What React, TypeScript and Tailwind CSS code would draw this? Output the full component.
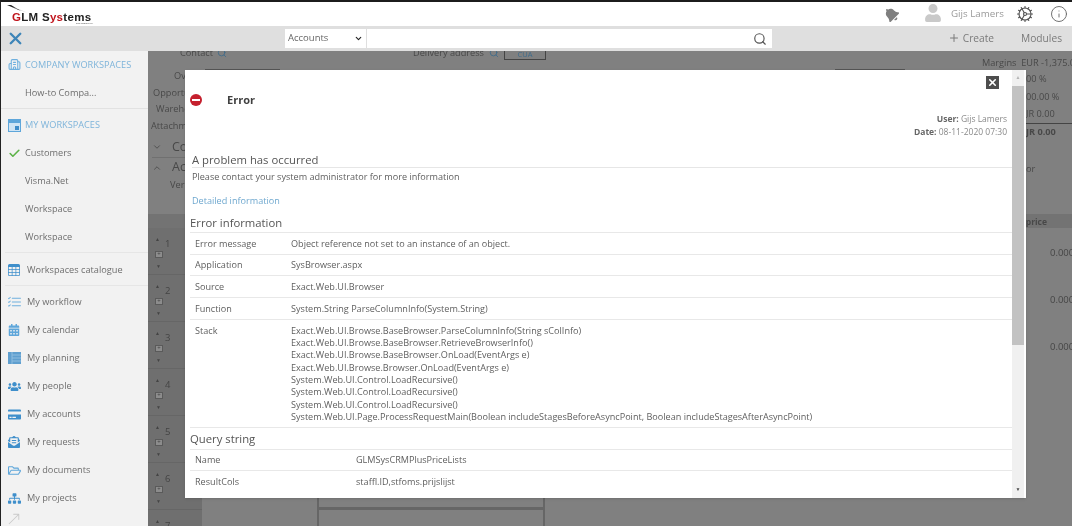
import { Building2, Check, ChevronDown, ChevronUp, Cog, Info, Plus, Search, X } from "lucide-react";
import { FaBell, FaCalendarAlt, FaCreditCard, FaEnvelopeOpenText, FaRegFolderOpen, FaSitemap, FaUser, FaUsers } from "react-icons/fa";
import { BsTable, BsListCheck, BsArrowUpRight } from "react-icons/bs";
import type { ReactNode } from "react";

const errorRows = [
  ["Error message", "Object reference not set to an instance of an object."],
  ["Application", "SysBrowser.aspx"],
  ["Source", "Exact.Web.UI.Browser"],
  ["Function", "System.String ParseColumnInfo(System.String)"],
];

const stack = [
  "Exact.Web.UI.Browse.BaseBrowser.ParseColumnInfo(String sColInfo)",
  "Exact.Web.UI.Browse.BaseBrowser.RetrieveBrowserInfo()",
  "Exact.Web.UI.Browse.BaseBrowser.OnLoad(EventArgs e)",
  "Exact.Web.UI.Browse.Browser.OnLoad(EventArgs e)",
  "System.Web.UI.Control.LoadRecursive()",
  "System.Web.UI.Control.LoadRecursive()",
  "System.Web.UI.Control.LoadRecursive()",
  "System.Web.UI.Page.ProcessRequestMain(Boolean includeStagesBeforeAsyncPoint, Boolean includeStagesAfterAsyncPoint)",
];

function PlanningIcon() {
  return (
    <svg width="13" height="12" viewBox="0 0 13 12">
      <rect width="13" height="12" fill="#5f9fcf" />
      <path d="M4 0V12M4 3H13M4 6H13M4 9H13" stroke="#8fbde0" strokeWidth="1" />
    </svg>
  );
}

function WindowIcon() {
  return (
    <svg width="13" height="13" viewBox="0 0 13 13">
      <rect width="13" height="13" fill="#5ea6da" />
      <rect x="1" y="4" width="11" height="8" fill="#cfe4f4" />
      <rect x="7" y="7" width="4" height="4" fill="#3f8cc8" />
    </svg>
  );
}

const menuItems: [string, ReactNode][] = [
  ["My workflow", <BsListCheck size={15} className="text-[#6fb0de]" />],
  ["My calendar", <FaCalendarAlt size={12} className="text-[#5ea6da]" />],
  ["My planning", <PlanningIcon />],
  ["My people", <FaUsers size={13} />],
  ["My accounts", <FaCreditCard size={13} />],
  ["My requests", <FaEnvelopeOpenText size={12} />],
  ["My documents", <FaRegFolderOpen size={13} className="text-[#5ea6da]" />],
  ["My projects", <FaSitemap size={13} />],
];

function WorkspaceRow({ label, icon }: { label: string; icon?: ReactNode }) {
  return (
    <div className="h-[28px] flex items-center">
      <div className="w-[24px] flex justify-center pl-[3px] shrink-0">{icon}</div>
      <span>{label}</span>
    </div>
  );
}

function MenuRow({ label, icon }: { label: string; icon: ReactNode }) {
  return (
    <div className="h-[28px] flex items-center">
      <div className="w-[26px] flex justify-center shrink-0 text-[#3f8fcb]">{icon}</div>
      <span>{label}</span>
    </div>
  );
}

function Sidebar() {
  return (
    <aside className="w-[147px] shrink-0 bg-[#f2f2f2] text-[9.2px] text-[#6e6e6e] overflow-hidden">
      <div className="h-[27px] mb-[1px] flex items-center text-[#7eb4da]">
        <div className="w-[24px] flex justify-center pl-[3px] text-[#6fb0de]"><Building2 size={13} /></div>
        <span>COMPANY WORKSPACES</span>
      </div>
      <WorkspaceRow label="How-to Compa..." />
      <div className="h-[2px] border-b border-[#e2e2e2]" />
      <div className="h-[28px] mt-[2px] flex items-center text-[#7eb4da]">
        <div className="w-[24px] flex justify-center pl-[3px]"><WindowIcon /></div>
        <span>MY WORKSPACES</span>
      </div>
      <WorkspaceRow label="Customers" icon={<Check size={13} strokeWidth={3} className="text-[#5cb247]" />} />
      <WorkspaceRow label="Visma.Net" />
      <WorkspaceRow label="Workspace" />
      <WorkspaceRow label="Workspace" />
      <div className="h-[2px] border-b border-[#e6e6e6] ml-[4px]" />
      <div className="mt-[3px]">
        <MenuRow label="Workspaces catalogue" icon={<BsTable size={12} />} />
      </div>
      <div className="h-[2px] border-b border-[#e6e6e6] ml-[4px]" />
      <div className="mt-[2px]">
        {menuItems.map(([label, icon]) => (
          <MenuRow key={label} label={label} icon={icon} />
        ))}
      </div>
      <div className="pl-[6px] text-[#c9c9c9]"><BsArrowUpRight size={14} /></div>
    </aside>
  );
}

function BackgroundRow({ n, price }: { n: number; price?: boolean }) {
  return (
    <div className="h-[47px] flex">
      <div className="w-[54px] shrink-0 bg-[#6f6f6f] border-b border-[#666] pl-[7px] pt-[9px] text-[#444] leading-none">
        <div className="flex gap-[5px] items-start h-[14px]">
          <span className="text-[5px]">▲</span>
          <span className="text-[9.5px] mt-[2px]">{n}</span>
        </div>
        <div className="w-[8px] h-[7px] border border-[#5a5a5a] bg-[#8c8c8c] text-[6px] text-center leading-[5px]">+</div>
        <div className="text-[5px] mt-[6px] pl-[1px]">▼</div>
      </div>
      <div className="w-[115px] shrink-0" />
      <div className="w-[228px] shrink-0 border-x-2 border-b-[3px] border-[#666]" />
      <div className="flex-1" />
      {price && <div className="pt-[18px] text-[9.5px] text-[#454545] w-[22px] overflow-hidden">0.000</div>}
    </div>
  );
}

function Background() {
  return (
    <main className="flex-1 bg-[#808080] text-[#484848] text-[9.2px] overflow-hidden">
      <div className="h-[163px] flex">
        <div className="w-[43px] shrink-0 whitespace-nowrap">
          <div className="pl-[32px] -mt-[5px] flex items-center gap-[4px] h-[13px]">
            Contact <Search size={10} className="text-[#3f6b8a] shrink-0" />
          </div>
          <div className="mt-[9px] leading-[16.5px]">
            <div className="pl-[26px]">Ov</div>
            <div className="pl-[5px]">Opportu</div>
            <div className="pl-[8px]">Wareho</div>
            <div className="pl-[3px]">Attachm</div>
          </div>
          <div className="h-[20px] mt-[3px] pl-[4px] flex items-center text-[12.5px]">
            <ChevronDown size={10} className="mr-[10px]" />Co
          </div>
          <div className="h-[20px] ml-[4px] border-t border-[#707070] flex items-center text-[12.5px]">
            <ChevronUp size={10} className="mr-[10px]" />Ac
          </div>
          <div className="pl-[22px] leading-[16px]">Ver</div>
        </div>
        <div className="flex-1">
          <div className="h-[10px] -mt-[3px] flex items-center pl-[222px]">
            <span className="whitespace-nowrap">Delivery address</span>
            <Search size={10} className="ml-[5px] text-[#3f6b8a] shrink-0" />
            <div className="ml-[5px] w-[42px] h-[13px] border border-t-0 border-[#444] text-[7.5px] text-center text-[#3f6b8a] leading-[14px]">CUA</div>
          </div>
          <div className="flex mt-[11px] pl-[14px]">
            <div className="w-[75px] h-[1px] bg-[#555]" />
            <div className="ml-[555px] w-[70px] h-[1px] bg-[#555]" />
          </div>
        </div>
        <div className="w-[90px] shrink-0 pt-[3px] leading-[17.6px] whitespace-nowrap overflow-hidden">
          <div className="h-[16px]">Margins&nbsp; EUR -1,375.0</div>
          <div className="pl-[44px]">
            <div>00 %</div>
            <div>00.00 %</div>
            <div>JR 0.00</div>
            <div className="font-bold border-t border-[#444] leading-[16px]">JR 0.00</div>
            <div className="mt-[20px]">or</div>
          </div>
        </div>
      </div>
      <div className="h-[14px] bg-[#737373] flex justify-end items-center pr-[25px] pt-[2px] text-[8.5px] font-bold">price</div>
      <div>
        {[1, 2, 3, 4, 5, 6, 7].map((n) => (
          <BackgroundRow key={n} n={n} price={n < 4} />
        ))}
      </div>
    </main>
  );
}

function ErrorDialog() {
  return (
    <div className="absolute left-[184px] top-[70px] w-[841px] h-[428px] bg-white flex text-[9.1px] text-[#5e5e5e] shadow-sm overflow-hidden">
      <div className="flex-1 min-w-0 relative">
        <div className="h-[60px] flex items-start pt-[24px] pl-[5px]">
          <div className="w-[12px] h-[12px] rounded-full bg-[#c5202e] flex items-center justify-center">
            <div className="w-[8px] h-[2.5px] bg-white" />
          </div>
          <span className="ml-[25px] -mt-[1px] text-[11px] font-bold text-[#404040] leading-[14px]">Error</span>
          <div className="ml-auto mr-[13px] -mt-[18px] w-[13px] h-[13px] bg-[#4d4d4d] flex items-center justify-center text-white">
            <X size={11} strokeWidth={3.5} />
          </div>
        </div>
        <div className="absolute right-[5px] top-[42px] text-right text-[8.5px] text-[#8a8a8a] leading-[13px]">
          <div><b className="text-[#666]">User:</b> Gijs Lamers</div>
          <div><b className="text-[#666]">Date:</b> 08-11-2020 07:30</div>
        </div>
        <div className="mt-[23px] ml-[7px]">
          <div className="text-[11.3px] leading-[14px] text-[#555] border-b border-[#e6e6e6]">A problem has occurred</div>
          <div className="mt-[2px] leading-[13px]">Please contact your system administrator for more information</div>
          <div className="mt-[11px] leading-[13px] text-[#6fa8cf]">Detailed information</div>
        </div>
        <div className="ml-[5px] mt-[9px] text-[11.3px] leading-[14px] text-[#555] border-b border-[#e8e8e8] h-[17px]">Error information</div>
        {errorRows.map(([label, value]) => (
          <div key={label} className="ml-[5px] h-[21.7px] flex items-center border-b border-[#e8e8e8] pl-[5px]">
            <span className="w-[96px] shrink-0">{label}</span>
            <span>{value}</span>
          </div>
        ))}
        <div className="ml-[5px] h-[108px] flex border-b border-[#e8e8e8] pl-[5px] pt-[5px] leading-[12.3px]">
          <span className="w-[96px] shrink-0">Stack</span>
          <div>
            {stack.map((line, i) => (
              <div key={i} className="whitespace-nowrap">{line}</div>
            ))}
          </div>
        </div>
        <div className="ml-[5px] mt-[4px] text-[11.3px] leading-[14px] text-[#555] border-b border-[#e8e8e8] h-[18px]">Query string</div>
        <div className="ml-[5px] h-[21px] flex items-center border-b border-[#e8e8e8] pl-[5px]">
          <span className="w-[161px] shrink-0">Name</span>
          <span>GLMSysCRMPlusPriceLists</span>
        </div>
        <div className="ml-[5px] h-[22px] flex items-center pl-[5px]">
          <span className="w-[161px] shrink-0">ResultCols</span>
          <span>staffl.ID,stfoms.prijslijst</span>
        </div>
      </div>
      <div className="w-[12px] mr-[2px] bg-[#f0f0f0] flex flex-col shrink-0">
        <div className="h-[16px] flex items-center justify-center text-[#b5b5b5] text-[5px]">▲</div>
        <div className="h-[259px] bg-[#c2c2c2]" />
        <div className="flex-1" />
        <div className="h-[16px] flex items-center justify-center text-[#4a4a4a] text-[5px]">▼</div>
      </div>
    </div>
  );
}

export default function App() {
  return (
    <div className="relative w-[1072px] h-[526px] overflow-hidden bg-white border-l border-[#222] blur-[0.4px] font-['Open_Sans',sans-serif]">
      <div className="h-[2px] bg-[#1c1c1c] -ml-[1px]" />
      <header className="h-[24px] bg-white flex items-center text-[#9a9a9a]">
        <div className="relative w-[100px] h-[24px] shrink-0">
          <svg className="absolute left-[6px] top-[2px]" width="30" height="10" viewBox="0 0 30 10">
            <path d="M0 1 L14 7 L4 1 Z M6 3 L21 9 L8 4 Z" fill="#222" />
          </svg>
          <div className="absolute left-[11px] top-[9px] text-[11.5px] leading-[12px] font-bold font-['Liberation_Sans',sans-serif] tracking-[0.3px] text-[#222] whitespace-nowrap">
            <span className="text-[#c0141c]">G</span>LM S<span className="text-[#c0141c]">ys</span>tems
          </div>
          <div className="absolute left-[75px] top-[20px] text-[2.5px] leading-[3px] text-[#444]">The Logistic Fit</div>
        </div>
        <div className="flex-1" />
        <FaBell size={15} className="text-[#7f7f7f] -rotate-45 mr-[25px]" />
        <FaUser size={18} className="text-[#c9c9c9] mr-[9px] -mt-[3px]" />
        <span className="text-[9.8px] text-[#9a9a9a] mr-[12px]">Gijs Lamers</span>
        <Cog size={18} strokeWidth={1.5} className="text-[#555] mr-[16px]" />
        <Info size={18} strokeWidth={1.25} className="text-[#6a6a6a] mr-[4px]" />
      </header>
      <div className="h-[25px] bg-[#dfdfdf] flex items-center text-[10.2px] text-[#7a7a7a]">
        <div className="w-[284px] pl-[5px] shrink-0">
          <X size={19} strokeWidth={3} className="text-[#3e85b8]" />
        </div>
        <div className="w-[81px] h-[19px] bg-white flex items-center justify-between pl-[3px] pr-[3px] text-[9.5px] text-[#666]">
          Accounts
          <ChevronDown size={9} strokeWidth={3} className="text-[#222]" />
        </div>
        <div className="w-[405px] h-[19px] ml-[1px] bg-white flex items-center justify-end pr-[5px]">
          <Search size={14} className="text-[#555]" />
        </div>
        <div className="flex-1 flex justify-end items-center pr-[10px]">
          <Plus size={12} className="mr-[3px]" />
          <span>Create</span>
          <span className="ml-[27px]">Modules</span>
        </div>
      </div>
      <div className="flex h-[475px]">
        <Sidebar />
        <Background />
      </div>
      <ErrorDialog />
    </div>
  );
}
